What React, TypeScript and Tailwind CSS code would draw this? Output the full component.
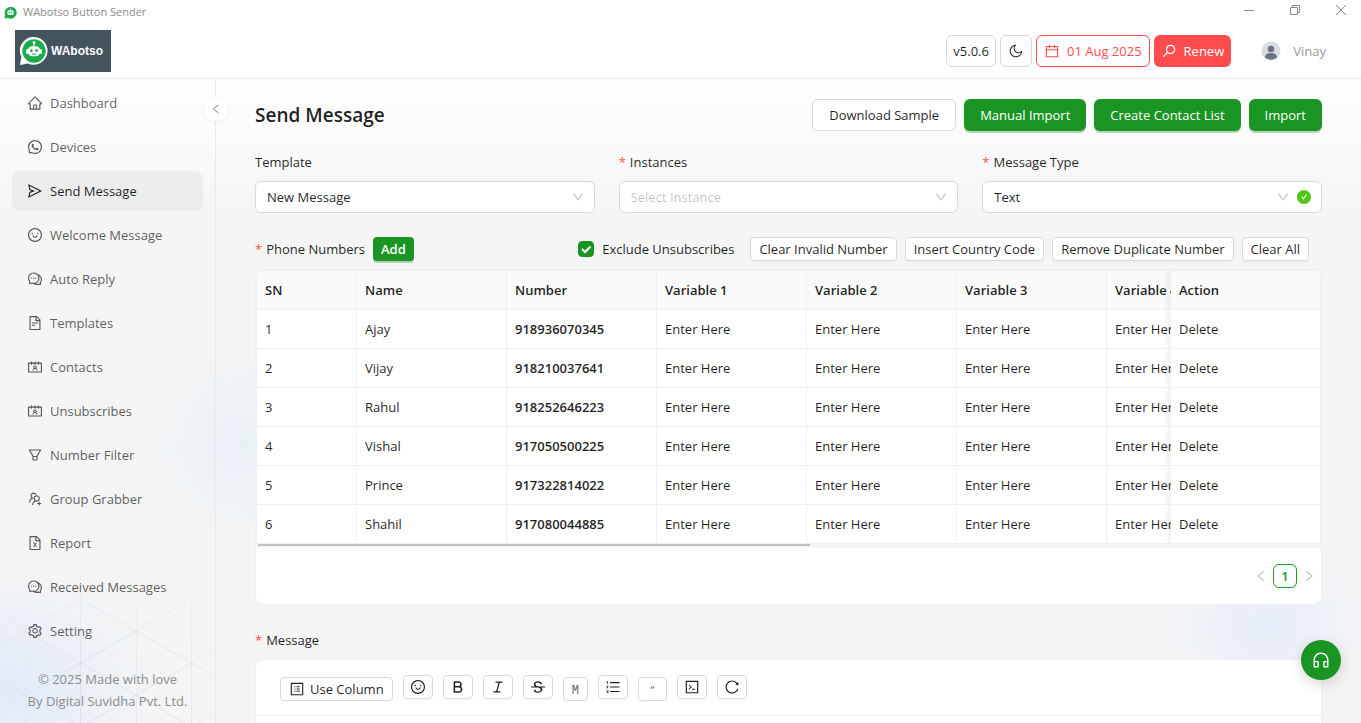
import { useState } from 'react'
import type { ReactNode } from 'react'
import type { IconType } from 'react-icons'
import {
  AiFillCheckCircle,
  AiOutlineBold,
  AiOutlineCalendar,
  AiOutlineCode,
  AiOutlineComment,
  AiOutlineContacts,
  AiOutlineCustomerService,
  AiOutlineDown,
  AiOutlineFileExcel,
  AiOutlineFileText,
  AiOutlineFilter,
  AiOutlineHome,
  AiOutlineItalic,
  AiOutlineLeft,
  AiOutlineMoon,
  AiOutlineOrderedList,
  AiOutlineProfile,
  AiOutlineReload,
  AiOutlineRight,
  AiOutlineSearch,
  AiOutlineSend,
  AiOutlineSetting,
  AiOutlineSmile,
  AiOutlineStrikethrough,
  AiOutlineUsergroupAdd,
  AiOutlineWhatsApp,
} from 'react-icons/ai'

const menu: { label: string; icon: IconType }[] = [
  { label: 'Dashboard', icon: AiOutlineHome },
  { label: 'Devices', icon: AiOutlineWhatsApp },
  { label: 'Send Message', icon: AiOutlineSend },
  { label: 'Welcome Message', icon: AiOutlineSmile },
  { label: 'Auto Reply', icon: AiOutlineComment },
  { label: 'Templates', icon: AiOutlineFileText },
  { label: 'Contacts', icon: AiOutlineContacts },
  { label: 'Unsubscribes', icon: AiOutlineContacts },
  { label: 'Number Filter', icon: AiOutlineFilter },
  { label: 'Group Grabber', icon: AiOutlineUsergroupAdd },
  { label: 'Report', icon: AiOutlineFileExcel },
  { label: 'Received Messages', icon: AiOutlineComment },
  { label: 'Setting', icon: AiOutlineSetting },
]

const contacts = [
  { name: 'Ajay', number: '918936070345' },
  { name: 'Vijay', number: '918210037641' },
  { name: 'Rahul', number: '918252646223' },
  { name: 'Vishal', number: '917050500225' },
  { name: 'Prince', number: '917322814022' },
  { name: 'Shahil', number: '917080044885' },
]

const variables = [1, 2, 3, 4]

const smallButton =
  'h-6 rounded border border-[#d9d9d9] bg-white px-2 whitespace-nowrap shadow-[0_2px_0_rgba(0,0,0,0.02)]'
const greenButton =
  'h-8 rounded-md bg-[#1a9523] px-4 font-medium whitespace-nowrap text-white shadow-[0_2px_0_rgba(20,120,30,0.3)]'
const toolButton =
  'flex h-6 w-[30px] items-center justify-center rounded border border-[#d9d9d9] bg-white text-black/88 shadow-[0_2px_0_rgba(0,0,0,0.02)]'
const headCell = 'border-r border-b border-[#f0f0f0] bg-[#fafafa] p-2 text-left font-semibold'
const cell = 'border-r border-b border-[#f0f0f0] bg-white p-2'
const stickyCell =
  'sticky right-0 before:absolute before:inset-y-0 before:-left-2 before:w-2 before:bg-linear-to-l before:from-black/5 before:to-transparent'

function Bot({ className }: { className: string }) {
  return (
    <svg viewBox="0 0 32 32" className={className} aria-hidden="true">
      <path d="M1 31 2.500 22.500A14.800 14.800 0 1 1 9.500 29.200Z" fill="#fff" />
      <path d="M16 3.500a12.500 12.500 0 1 0 .01 0Z" fill="#1bab4b" />
      <path d="M16 7v4" stroke="#fff" strokeWidth="1.2" />
      <circle cx="16" cy="7" r="1.5" fill="#fff" />
      <rect x="7.5" y="14" width="3" height="5" rx="1" fill="#fff" />
      <rect x="21.5" y="14" width="3" height="5" rx="1" fill="#fff" />
      <rect x="9.5" y="11" width="13" height="10.500" rx="4.500" fill="#fff" />
      <circle cx="13.2" cy="15.5" r="1.5" fill="#1bab4b" />
      <circle cx="18.8" cy="15.5" r="1.5" fill="#1bab4b" />
      <path d="M13.5 18.800q2.500 1.600 5 0" stroke="#1bab4b" strokeWidth="1" fill="none" />
    </svg>
  )
}

function SmallBot({ className }: { className: string }) {
  return (
    <svg viewBox="0 0 26 26" className={className} aria-hidden="true">
      <path d="M1 25 2 17A12 12 0 1 1 8 24Z" fill="#1bab4b" />
      <path d="M13 5v4" stroke="#fff" strokeWidth="1.5" />
      <rect x="6.5" y="8.500" width="13" height="9.500" rx="4" fill="#fff" />
      <circle cx="10.500" cy="13" r="1.6" fill="#1bab4b" />
      <circle cx="15.500" cy="13" r="1.6" fill="#1bab4b" />
    </svg>
  )
}

function Backdrop() {
  return (
    <div className="pointer-events-none absolute inset-0 -z-10 overflow-hidden bg-linear-to-b from-white from-10% to-[#f5f5f5] to-30%">
      <div className="absolute top-[340px] left-[140px] h-52 w-52 bg-radial from-[#e8f0f7] to-transparent to-70%" />
      <div className="absolute -right-4 bottom-0 h-48 w-56 bg-radial from-[#e6edf8] to-transparent to-70%" />
      <div className="absolute -bottom-24 -left-40 h-64 w-80 bg-radial from-[#e0eaf8] to-transparent to-70%" />
      <svg className="absolute bottom-0 left-0 h-40 w-64 mask-t-from-40% mask-r-from-60%">
        <defs>
          <pattern id="grid" width="111" height="64" patternUnits="userSpaceOnUse" patternTransform="translate(25 4)">
            <path
              d="M0 0v64M55.5 0v64M0 0 111 64M111 0 0 64"
              fill="none"
              stroke="#dae4ee"
              strokeWidth="1"
            />
          </pattern>
        </defs>
        <rect width="100%" height="100%" fill="url(#grid)" />
      </svg>
    </div>
  )
}

function TitleBar() {
  return (
    <div className="flex h-6 items-center justify-between pr-[14px] pl-1 text-[#8c8c8c]">
      <div className="flex items-center gap-[6px] text-[11px]">
        <SmallBot className="size-[13px]" />
        <span>WAbotso Button Sender</span>
      </div>
      <div className="flex items-center gap-[34px] pb-1">
        <button aria-label="Minimize">
          <svg viewBox="0 0 12 12" className="size-3" fill="none" stroke="currentColor">
            <path d="M1 6.5h10" />
          </svg>
        </button>
        <button aria-label="Restore">
          <svg viewBox="0 0 12 12" className="size-3" fill="none" stroke="currentColor">
            <path d="M1.5 3.5h7v7h-7zM3.500 3.500v-2h7v7h-2" />
          </svg>
        </button>
        <button aria-label="Close">
          <svg viewBox="0 0 12 12" className="size-3" fill="none" stroke="currentColor">
            <path d="M1 1l10 10M11 1 1 11" />
          </svg>
        </button>
      </div>
    </div>
  )
}

function Header() {
  return (
    <header className="flex h-[55px] items-center justify-between border-b border-[#ebebeb] pr-[35px] pl-[15px]">
      <div className="flex h-[42px] w-24 items-center gap-[2px] bg-[#43545e] pl-1">
        <Bot className="size-[30px]" />
        <span className="font-[family-name:'Liberation_Sans'] text-xs font-bold text-white">WAbotso</span>
      </div>
      <div className="flex items-center gap-1">
        <button className="h-8 rounded-md border border-[#d9d9d9] bg-white px-[6px]">v5.0.6</button>
        <button
          aria-label="Dark mode"
          className="flex size-8 items-center justify-center rounded-md border border-[#d9d9d9] bg-white"
        >
          <AiOutlineMoon className="size-4" />
        </button>
        <button className="flex h-8 items-center gap-[7px] rounded-md border border-[#ff4d4f] bg-white px-[7px] text-[#ff4d4f]">
          <AiOutlineCalendar className="size-4" />
          01 Aug 2025
        </button>
        <button className="flex h-8 items-center gap-[7px] rounded-md bg-[#ff4d4f] px-[7px] font-medium text-white">
          <AiOutlineSearch className="size-4 -scale-x-100" />
          Renew
        </button>
        <div className="ml-[26px] flex items-center gap-3 text-[#999]">
          <svg viewBox="0 0 20 20" className="size-5" aria-hidden="true">
            <circle cx="10" cy="10" r="9.500" fill="#d9dce0" />
            <circle cx="10" cy="8" r="3.2" fill="#6b7280" />
            <path d="M4 16.500c0-3.500 3-4.500 6-4.500s6 1 6 4.500a9.500 9.500 0 0 1-12 0Z" fill="#6b7280" />
          </svg>
          <span>Vinay</span>
        </div>
      </div>
    </header>
  )
}

function Sidebar() {
  return (
    <aside className="relative flex w-[216px] shrink-0 flex-col border-r border-[#e8ebee]">
      <nav className="flex flex-col gap-1 px-3 pt-1">
        {menu.map(({ label, icon: Icon }) => (
          <a
            key={label}
            href="#"
            className={
              label === 'Send Message'
                ? 'flex h-10 items-center gap-[7px] rounded-lg bg-black/4 px-[15px] text-black/88'
                : 'flex h-10 items-center gap-[7px] rounded-lg px-[15px] text-black/65'
            }
          >
            <Icon className="size-4" />
            {label}
          </a>
        ))}
      </nav>
      <p className="pt-[17px] text-center text-[#8c8c8c]">
        © 2025 Made with love
        <br />
        By Digital Suvidha Pvt. Ltd.
      </p>
      <button
        aria-label="Collapse menu"
        className="absolute top-[18px] -right-[13px] flex size-6 items-center justify-center rounded-full bg-white text-black/40 shadow-[0_1px_4px_rgba(0,0,0,0.06)]"
      >
        <AiOutlineLeft className="size-3" />
      </button>
    </aside>
  )
}

function Label({ htmlFor, required, children }: { htmlFor: string; required?: boolean; children: ReactNode }) {
  return (
    <label htmlFor={htmlFor} className="flex gap-1">
      {required && <span className="text-[#ff4d4f]">*</span>}
      {children}
    </label>
  )
}

type FieldProps = {
  id: string
  label: string
  option: string
  required?: boolean
  placeholder?: boolean
  success?: boolean
}

function Field({ id, label, option, required, placeholder, success }: FieldProps) {
  return (
    <div className="flex flex-col gap-2">
      <Label htmlFor={id} required={required}>
        {label}
      </Label>
      <div className="relative">
        <select
          id={id}
          className={
            placeholder
              ? 'h-8 w-full appearance-none rounded-md border border-[#d9d9d9] bg-white px-[11px] text-black/25'
              : 'h-8 w-full appearance-none rounded-md border border-[#d9d9d9] bg-white px-[11px]'
          }
        >
          <option>{option}</option>
        </select>
        <div className="pointer-events-none absolute inset-y-0 right-[10px] flex items-center gap-[6px]">
          <AiOutlineDown className="size-[14px] text-black/25" />
          {success && <AiFillCheckCircle className="size-4 text-[#52c41a]" />}
        </div>
      </div>
    </div>
  )
}

function ContactsTable() {
  return (
    <div className="rounded-lg border border-[#f0f0f0] bg-white">
      <div className="overflow-x-auto rounded-t-lg [scrollbar-width:none]">
        <table className="w-[1151px] table-fixed border-separate border-spacing-0 border-t border-l border-[#f0f0f0]">
          <thead>
            <tr>
              <th className={`w-[100px] ${headCell}`}>SN</th>
              <th className={headCell}>Name</th>
              <th className={headCell}>Number</th>
              {variables.map((n) => (
                <th key={n} className={headCell}>
                  Variable {n}
                </th>
              ))}
              <th className={`${headCell} ${stickyCell}`}>Action</th>
            </tr>
          </thead>
          <tbody>
            {contacts.map((c, i) => (
              <tr key={c.number}>
                <td className={cell}>{i + 1}</td>
                <td className={cell}>{c.name}</td>
                <td className={`font-semibold ${cell}`}>{c.number}</td>
                {variables.map((n) => (
                  <td key={n} className={cell}>
                    Enter Here
                  </td>
                ))}
                <td className={`${cell} ${stickyCell}`}>Delete</td>
              </tr>
            ))}
          </tbody>
        </table>
      </div>
      {/* Scroll position */}
      <div className="h-1 bg-[#f5f5f5] px-[2px]">
        <div className="h-[2px] w-[52%] bg-[#c1c1c1]" />
      </div>
      {/* Pagination */}
      <div className="flex items-center justify-end gap-[5px] pt-4 pr-[5px] pb-4">
        <button aria-label="Previous page" className="text-black/25">
          <AiOutlineLeft className="size-[14px]" />
        </button>
        <button className="size-6 rounded-md border border-[#1a9523] bg-white font-semibold text-[#1a9523]">
          1
        </button>
        <button aria-label="Next page" className="text-black/25">
          <AiOutlineRight className="size-[14px]" />
        </button>
      </div>
    </div>
  )
}

function Toolbar() {
  return (
    <div className="flex h-14 items-start gap-[10px] border-b border-[#f0f0f0] px-6 pt-[15px]">
      <button className={`mt-[2px] flex items-center gap-[5px] ${smallButton}`}>
        <AiOutlineProfile className="size-4" />
        Use Column
      </button>
      <button aria-label="Emoji" className={toolButton}>
        <AiOutlineSmile className="size-4" />
      </button>
      <button aria-label="Bold" className={toolButton}>
        <AiOutlineBold className="size-4" />
      </button>
      <button aria-label="Italic" className={toolButton}>
        <AiOutlineItalic className="size-4" />
      </button>
      <button aria-label="Strikethrough" className={toolButton}>
        <AiOutlineStrikethrough className="size-4" />
      </button>
      <button className={`mt-[2px] text-[#666] ${smallButton}`}>
        <span className="font-[family-name:'Liberation_Mono'] text-xs">M</span>
      </button>
      <button aria-label="Ordered list" className={toolButton}>
        <AiOutlineOrderedList className="size-4" />
      </button>
      <button className={`mt-[2px] w-[29px] text-[#666] ${smallButton}`}>
        <span className="text-[11px]">“</span>
      </button>
      <button aria-label="Code" className={toolButton}>
        <AiOutlineCode className="size-4" />
      </button>
      <button aria-label="Reset" className={toolButton}>
        <AiOutlineReload className="size-4" />
      </button>
    </div>
  )
}

export default function App() {
  const [exclude, setExclude] = useState(true)

  return (
    <div className="relative isolate flex h-screen flex-col overflow-hidden font-['Open_Sans','Noto_Sans',sans-serif] text-[13px] leading-[22px] text-black/88">
      <Backdrop />
      <TitleBar />
      <Header />
      <div className="flex min-h-0 flex-1">
        <Sidebar />
        <main className="min-w-0 flex-1 px-[39px] pt-5">
          <div className="flex h-8 items-center justify-between">
            <h1 className="text-[19px] leading-8 font-semibold">Send Message</h1>
            <div className="flex gap-2">
              <button className="h-8 rounded-md border border-[#d9d9d9] bg-white px-4 whitespace-nowrap">
                Download Sample
              </button>
              <button className={greenButton}>Manual Import</button>
              <button className={greenButton}>Create Contact List</button>
              <button className={greenButton}>Import</button>
            </div>
          </div>

          <div className="mt-5 grid grid-cols-3 gap-6">
            <Field id="template" label="Template" option="New Message" />
            <Field id="instances" label="Instances" option="Select Instance" required placeholder />
            <Field id="type" label="Message Type" option="Text" required success />
          </div>

          <div className="mt-6 mb-2 flex items-center justify-between pr-[13px]">
            <div className="flex items-center gap-2">
              <Label htmlFor="add" required>
                Phone Numbers
              </Label>
              <button
                id="add"
                className="h-6 rounded bg-[#1a9523] px-2 font-semibold text-white shadow-[0_2px_0_rgba(20,120,30,0.3)]"
              >
                Add
              </button>
            </div>
            <div className="flex items-center gap-2">
              <label className="mr-2 flex items-center gap-2">
                <span className="relative flex size-4">
                  <input
                    type="checkbox"
                    checked={exclude}
                    onChange={() => setExclude(!exclude)}
                    className="size-4 appearance-none rounded border border-[#d9d9d9] bg-white checked:border-[#1a9523] checked:bg-[#1a9523]"
                  />
                  <svg
                    viewBox="0 0 16 16"
                    className="pointer-events-none absolute inset-0 size-4"
                    fill="none"
                    stroke="#fff"
                    strokeWidth="2"
                  >
                    <path d="M4 8l3 3 5.500-5.500" />
                  </svg>
                </span>
                Exclude Unsubscribes
              </label>
              <button className={smallButton}>Clear Invalid Number</button>
              <button className={smallButton}>Insert Country Code</button>
              <button className={smallButton}>Remove Duplicate Number</button>
              <button className={smallButton}>Clear All</button>
            </div>
          </div>

          <ContactsTable />

          <div className="mt-6 mb-2">
            <Label htmlFor="message" required>
              Message
            </Label>
          </div>
          <div className="rounded-lg border border-[#f0f0f0] bg-white">
            <Toolbar />
            <textarea id="message" className="block w-full resize-none p-6 outline-none" rows={6} />
          </div>
        </main>
      </div>
      <button
        aria-label="Support"
        className="absolute right-5 bottom-[43px] flex size-10 items-center justify-center rounded-full bg-[#1a9523] text-white shadow-[0_4px_14px_rgba(0,0,0,0.15)]"
      >
        <AiOutlineCustomerService className="size-5" />
      </button>
    </div>
  )
}
